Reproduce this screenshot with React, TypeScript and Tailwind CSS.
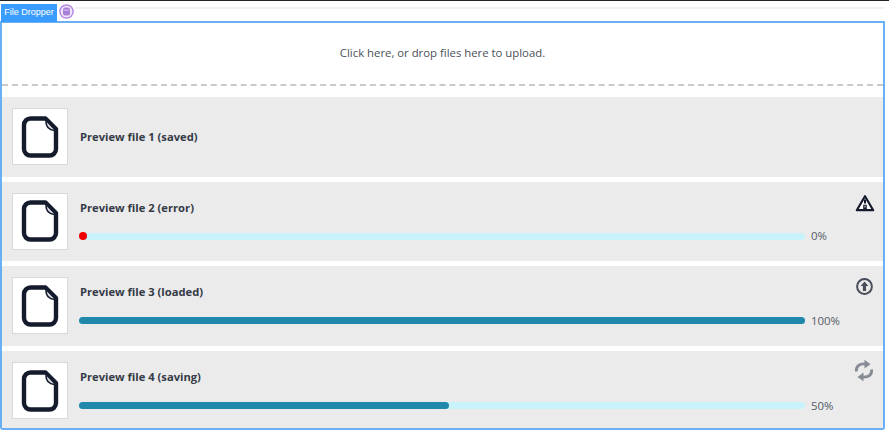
type Item = {
  name: string
  progress?: number
  fill?: number
  error?: boolean
  status?: 'error' | 'loaded' | 'saving'
}

const items: Item[] = [
  { name: 'Preview file 1 (saved)' },
  { name: 'Preview file 2 (error)', progress: 0, fill: 0, error: true, status: 'error' },
  { name: 'Preview file 3 (loaded)', progress: 100, fill: 100, status: 'loaded' },
  { name: 'Preview file 4 (saving)', progress: 50, fill: 51, status: 'saving' },
]

function FileIcon() {
  return (
    <svg width="38" height="42" viewBox="0 0 38 42" fill="none">
      <path
        d="M9.5 2.5H24.5L35 13V33C35 36.6 32.1 39.5 28.5 39.5H9.5C5.9 39.5 3 36.6 3 33V9C3 5.4 5.9 2.5 9.5 2.5Z"
        fill="#fff"
        stroke="#141b2d"
        strokeWidth="4.4"
        strokeLinejoin="round"
      />
      <path d="M25 5.5C25 10.5 28 14 33.5 14.5L25 5.5Z" fill="#dcdce4" />
      <path d="M25 5.5C25 10.5 28 14 33.5 14.5" stroke="#141b2d" strokeWidth="1.6" />
    </svg>
  )
}

function StatusIcon({ status }: { status: Item['status'] }) {
  if (status === 'error') {
    return (
      <svg width="20" height="18" viewBox="0 0 20 18" className="mr-[8px] mt-3">
        <path d="M10 2.2L18.2 16.2H1.8Z" fill="#fff" stroke="#141b2d" strokeWidth="2.2" strokeLinejoin="round" />
        <path d="M9 5.5H11V9.5H9ZM8.2 10.8H11.8V16H8.2Z" fill="#141b2d" />
        <path d="M9.5 11.8H10.5V13.4H9.5Z" fill="#fff" />
      </svg>
    )
  }
  if (status === 'loaded') {
    return (
      <svg width="17" height="17" viewBox="0 0 17 17" className="mr-[10px] mt-[12px]">
        <circle cx="8.5" cy="8.5" r="7.4" fill="none" stroke="#474e5a" strokeWidth="2" />
        <path d="M8.5 3.6L12.4 8H10.1V13H6.9V8H4.6Z" fill="#474e5a" />
      </svg>
    )
  }
  if (status === 'saving') {
    return (
      <svg width="20" height="23" viewBox="0 0 20 23" className="mr-[9px] mt-[8px]" fill="none">
        <path d="M2.5 12.5C1.5 7.5 5.5 4.5 11 5" stroke="#868b94" strokeWidth="2.8" />
        <path d="M10.5 0.8L16.5 5.3L10.5 9.6Z" fill="#868b94" />
        <path d="M17.5 10.5C18.5 15.5 14.5 18.5 9 18" stroke="#868b94" strokeWidth="2.8" />
        <path d="M9.5 13.4L3.5 17.9L9.5 22.2Z" fill="#868b94" />
      </svg>
    )
  }
  return null
}

function FileRow({ item }: { item: Item }) {
  const hasBar = item.progress !== undefined
  return (
    <div className="flex h-[79.7px] items-start bg-[#ebebeb] pl-[10px]">
      <div className="mt-[11px] flex h-[57px] w-[56px] shrink-0 items-center justify-center border border-[#d9d9d9] bg-white">
        <FileIcon />
      </div>
      <div className="ml-[11px] flex min-w-0 flex-1 flex-col">
        <div className={`pl-px text-[11.2px] font-bold leading-4 text-[#343a46] ${hasBar ? 'mt-[18px]' : 'mt-[32px]'}`}>
          {item.name}
        </div>
        {hasBar && (
          <div className="mt-[12.5px] flex items-center">
            <div className="relative h-[7px] w-[726px] rounded-full bg-[#c9f3fb]">
              <div className="h-full rounded-full bg-[#2088aa]" style={{ width: `${item.fill}%` }} />
              {item.error && <span className="absolute left-0 -top-[0.5px] h-2 w-2 rounded-full bg-[#f00000]" />}
            </div>
            <span className="ml-[6px] text-[11.4px] leading-4 text-[#555b66]">{item.progress}%</span>
          </div>
        )}
      </div>
      <StatusIcon status={item.status} />
    </div>
  )
}

export default function App() {
  return (
    <div className="h-[431px] w-[889px] overflow-hidden bg-white font-['Open_Sans',sans-serif]">
      <div className="h-px bg-[#222]" />
      <div className="flex h-[20px] items-start pt-[3px]">
        <div className="ml-px flex h-[18px] w-[56px] items-center justify-center bg-[#3b9cff] font-['Liberation_Sans',sans-serif] text-[9px] text-white">
          File Dropper
        </div>
        <svg width="15" height="15" viewBox="0 0 15 15" className="ml-[2px]">
          <circle cx="7.5" cy="7.5" r="6.6" fill="#efe6fa" stroke="#b58be6" strokeWidth="1.5" />
          <rect x="4" y="3.5" width="7" height="8" rx="2" fill="#a77fd6" />
          <path d="M4.5 5.6C6 6.6 9 6.6 10.5 5.6" fill="none" stroke="#e6d9f6" strokeWidth="0.8" />
        </svg>
        <div className="ml-px mr-[5px] mt-[3px] h-[2px] flex-1 bg-[#f1f1f1]" />
      </div>
      <div className="mr-[4px] h-[409px] overflow-hidden rounded-b-[3px] border-2 border-[#69aff5]">
        <div className="flex h-[62.5px] items-center justify-center border-b-2 border-dashed border-[#c9c9c9] pb-px text-[11.35px] text-[#4a4f59]">
          Click here, or drop files here to upload.
        </div>
        <div className="mt-[11.5px] flex flex-col gap-[5px]">
          {items.map((item) => (
            <FileRow key={item.name} item={item} />
          ))}
        </div>
      </div>
    </div>
  )
}
